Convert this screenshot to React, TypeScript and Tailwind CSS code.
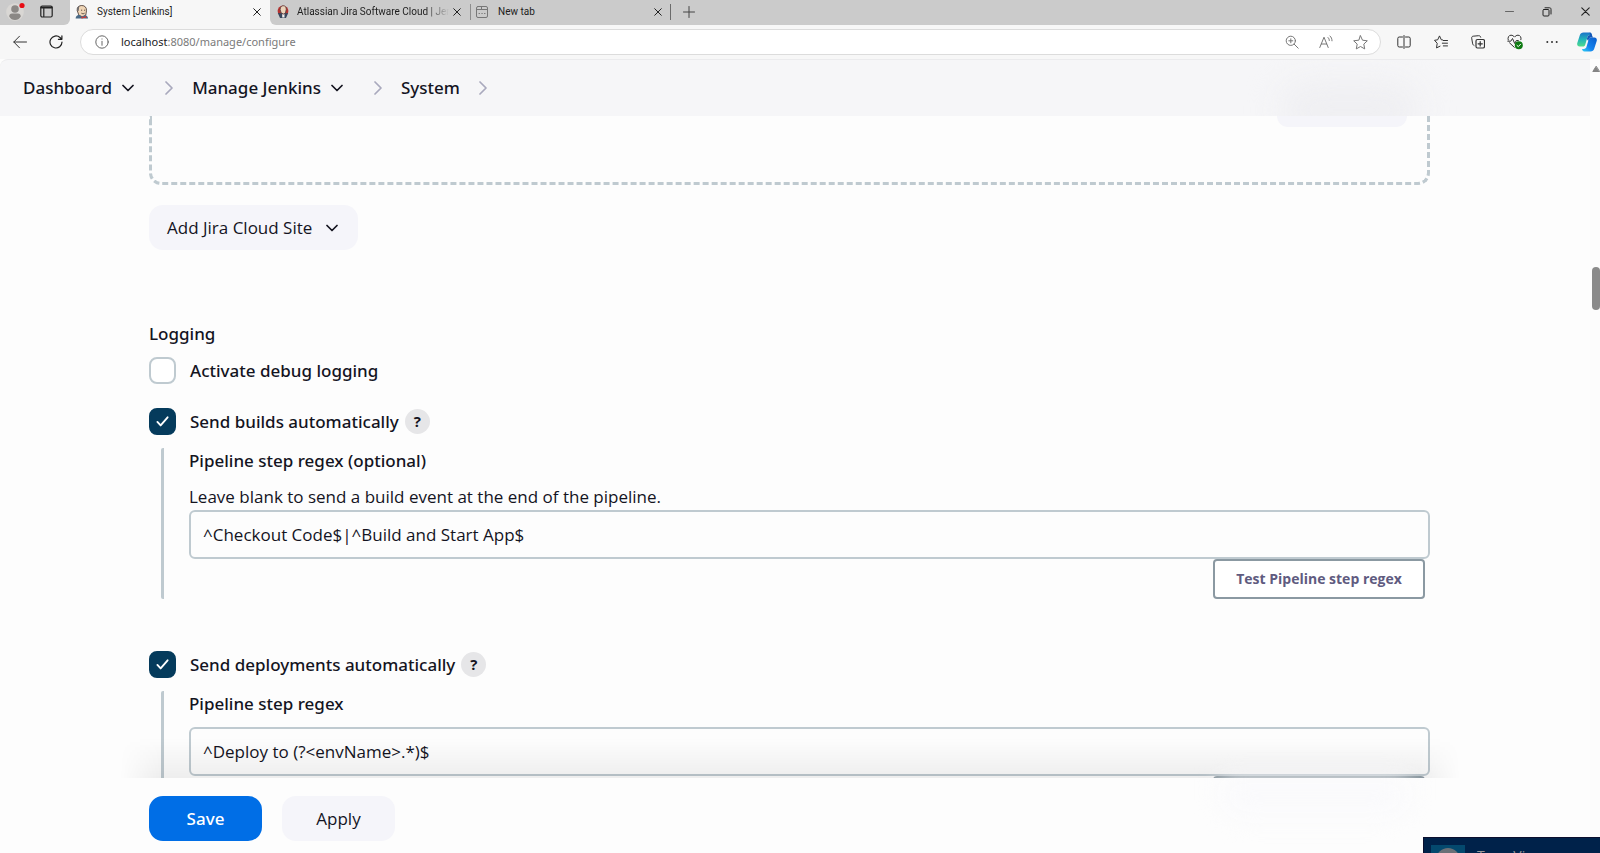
import { useState } from 'react'
import type { ReactNode } from 'react'

const iconBtn = 'flex h-full items-center justify-center'

function Svg({ size = 16, box = 16, width = 1, className = '', children }: {
  size?: number
  box?: number
  width?: number
  className?: string
  children: ReactNode
}) {
  return (
    <svg
      width={size}
      height={size}
      viewBox={`0 0 ${box} ${box}`}
      fill="none"
      stroke="currentColor"
      strokeWidth={width}
      strokeLinecap="round"
      strokeLinejoin="round"
      className={`shrink-0 ${className}`}
      aria-hidden="true"
    >
      {children}
    </svg>
  )
}

function JenkinsIcon() {
  return (
    <svg width="14" height="14" viewBox="0 0 14 14" className="shrink-0" aria-hidden="true">
      <path d="M2.2 5.5C1.8 2.2 4 .5 6.8.5c3 0 4.9 2 4.7 5.2L10.8 10 8 12 4 10.500z" fill="#f0d6b7" stroke="#40302a" strokeWidth=".8" />
      <path d="M2.400 6C1.500 4 2.500 1.500 4.500.8 3.900 2.300 4.100 4 3.600 6z" fill="#6d6b6d" />
      <path d="M.6 13.600c.2-2.300 1.300-3.500 3.400-3.800l3 1.800 3-1.600c1.900.3 2.900 1.600 3.100 3.600z" fill="#4a6a86" />
      <path d="M6.500 11.200l2.100 1 2.400-1.400.4 2.500-2.500-.5-2.300 1z" fill="#d33833" />
      <path d="M6 5.200h1.200M9 5.200h1.200M6.400 8.200c1 .7 2.200.7 3.200 0" stroke="#40302a" strokeWidth=".8" fill="none" />
    </svg>
  )
}

function JiraCloudIcon() {
  return (
    <svg width="12" height="14" viewBox="0 0 12 14" className="shrink-0" aria-hidden="true">
      <circle cx="6" cy="6" r="5.400" fill="#b5322f" />
      <path d="M3.200 4.500C3.300 1.600 4.800.8 6.300.8c2.100 0 3 1.400 2.900 3.700L8.400 8 6.500 9 4.100 7.800z" fill="#ecd3ba" stroke="#463a38" strokeWidth=".7" />
      <path d="M.8 8 5 8.300l1.200 2 1.600-2L11.200 8 9 13H3z" fill="#39465c" />
      <path d="m5.200 8.800 1 1 1.200-1 .2 3.700H5.200z" fill="#f1f1f1" />
    </svg>
  )
}

function CopilotIcon() {
  return (
    <svg width="20" height="20" viewBox="0 0 20 20" className="shrink-0" aria-hidden="true">
      <defs>
        <linearGradient id="cpA" x1="0" y1="0" x2="0" y2="1">
          <stop offset="0" stopColor="#1b74c9" />
          <stop offset=".5" stopColor="#22b5b8" />
          <stop offset="1" stopColor="#4fdc8c" />
        </linearGradient>
        <linearGradient id="cpB" x1="1" y1="0" x2="0" y2="1">
          <stop offset="0" stopColor="#0a5ccb" />
          <stop offset=".6" stopColor="#1583ee" />
          <stop offset="1" stopColor="#2fd0f5" />
        </linearGradient>
      </defs>
      <path d="M6.500.5h6.200c1.400 0 1.800 1 2.200 2.500H13c-1.400 0-2.200.9-2.600 2.200L8.300 12.500c-.4 1.400-1.100 2-2.500 2H2.600C.6 14.500-.2 13 .3 11L2.800 3.300C3.400 1.500 4.600.5 6.500.5z" fill="url(#cpA)" />
      <path d="M13.500 19.500H7.300c-1.400 0-1.900-1-2.300-2.500h1.900c1.400 0 2.200-.9 2.600-2.200l2.200-7.300c.4-1.400 1.100-2 2.500-2h3.200c2 0 2.800 1.500 2.300 3.500l-2.500 7.700c-.6 1.800-1.800 2.800-3.700 2.800z" fill="url(#cpB)" />
      <path d="M12.700.5c1.600 0 2 1.600 2.500 3.200.3 1 .8 1.800 1.800 1.800h-2.800c-1.400 0-2.100.6-2.500 2L11.300 9 9.900 7l.5-1.800C10.800 3.900 11.600 3 13 3z" fill="#1558b8" />
    </svg>
  )
}

function CloseX({ size = 8 }: { size?: number }) {
  return (
    <Svg size={size} box={8} className="text-[#222]">
      <path d="M.7.7l6.600 6.600M7.300.7.7 7.300" />
    </Svg>
  )
}

function TabBar() {
  return (
    <div className="flex h-[25px] shrink-0 items-stretch bg-[#f7f7f7] font-['Roboto','Noto_Sans',sans-serif] text-[10px] leading-3 text-[#1d1d1d]">
      <div className="flex w-[70px] shrink-0 items-center rounded-br-md bg-[#cbcbcb] pb-[2px] pl-[6px]">
        <button aria-label="Profile">
          <svg width="20" height="20" viewBox="0 0 20 20" aria-hidden="true">
            <circle cx="9" cy="10" r="8.800" fill="#d9d7d4" />
            <circle cx="9" cy="7" r="3.800" fill="#8b8885" />
            <path d="M3.200 14.500c0-2 1.200-3 2.800-3h6c1.600 0 2.800 1 2.800 3C13.500 17 11.500 18 9 18s-4.500-1-5.800-3.500z" fill="#8b8885" />
            <circle cx="16" cy="3.500" r="2.600" fill="#e80c14" />
          </svg>
        </button>
        <button aria-label="Workspaces" className="ml-[14px]">
          <Svg size={13} box={13} width={1.2} className="text-[#222]">
            <rect x=".8" y="1" width="11.400" height="11" rx="1.500" />
            <path d="M1.500 2.500h10" strokeWidth="2.200" />
            <path d="M3.800 3.500v8" />
          </Svg>
        </button>
      </div>
      <div className="flex w-[200px] shrink-0 items-center bg-[#f7f7f7] pr-[9px] pb-[2px] pl-[5px]">
        <JenkinsIcon />
        <span className="ml-2 flex-1">System [Jenkins]</span>
        <button aria-label="Close tab"><CloseX /></button>
      </div>
      <div className="flex min-w-0 flex-1 items-stretch rounded-bl-md bg-[#cbcbcb]">
        <div className="flex w-[200px] shrink-0 items-center pr-[9px] pb-[2px] pl-[7px]">
          <JiraCloudIcon />
          <span className="ml-2 min-w-0 flex-1 mask-r-from-85% whitespace-nowrap">
            Atlassian Jira Software Cloud | Jen
          </span>
          <button aria-label="Close tab" className="ml-1"><CloseX /></button>
        </div>
        <div className="mt-1 mb-[5px] w-px bg-[#8d8d8d]" />
        <div className="flex w-[199px] shrink-0 items-center pr-[8px] pb-[2px] pl-[5px]">
          <Svg size={12} box={12} className="text-[#777]">
            <rect x=".5" y=".5" width="11" height="11" rx="1.500" />
            <path d="M1 3.500h4.500V1M5.500 3.500H11" />
            <path d="M3 7.500h.5M5.800 7.500h.5M8.500 7.500H9" />
          </Svg>
          <span className="ml-[10px] flex-1">New tab</span>
          <button aria-label="Close tab"><CloseX /></button>
        </div>
        <div className="mt-1 mb-[5px] w-px bg-[#6b6b6b]" />
        <button aria-label="New tab" className="flex w-9 items-center justify-center pb-[2px]">
          <Svg size={12} box={12} className="text-[#444]">
            <path d="M6 .5v11M.5 6h11" />
          </Svg>
        </button>
        <div className="ml-auto flex pb-[2px]">
          <button aria-label="Minimize" className="flex w-[38px] items-center justify-center">
            <Svg size={9} box={9} className="text-[#666]"><path d="M.5 4.500h8" /></Svg>
          </button>
          <button aria-label="Restore" className="flex w-[38px] items-center justify-center">
            <Svg size={10} box={10} className="text-[#222]">
              <rect x="1" y="2.500" width="6" height="6.500" rx="1" />
              <path d="M3 .8h4.500c1 0 1.500.5 1.500 1.500V7" />
            </Svg>
          </button>
          <button aria-label="Close" className="flex w-[34px] items-center justify-center pl-1">
            <CloseX size={9} />
          </button>
        </div>
      </div>
    </div>
  )
}

function Toolbar() {
  return (
    <div className="flex h-[34px] shrink-0 items-center bg-[#f7f7f7] text-[#4b4b4b]">
      <button aria-label="Back" className={`${iconBtn} w-10`}>
        <Svg size={14} box={14} className="text-[#333]"><path d="M13.500 7H.8M6.500 1.200.8 7l5.700 5.800" /></Svg>
      </button>
      <button aria-label="Refresh" className={`${iconBtn} w-8`}>
        <Svg size={14} box={14} width={1.2} className="text-[#222]">
          <path d="M13 7a6 6 0 1 1-2-4.500l1.800 1.700M12.900.8v3.500H9.400" />
        </Svg>
      </button>
      <div className="ml-2 flex h-[26px] flex-1 items-center rounded-full border border-[#dcdcdc] bg-white pr-[12px] pl-[14px]">
        <Svg size={14} box={14} className="text-[#666]">
          <circle cx="7" cy="7" r="6.200" />
          <path d="M7 6.300v4M7 3.900v.2" />
        </Svg>
        <div className="ml-3 flex-1 font-['Noto_Sans',sans-serif] text-[11px]">
          <span className="text-[#222]">localhost</span>
          <span className="text-[#7a7a7a]">:8080/manage/configure</span>
        </div>
        <div className="flex items-center gap-5 text-[#777]">
          <button aria-label="Zoom">
            <Svg size={14} box={14}>
              <circle cx="5.800" cy="5.800" r="4.600" />
              <path d="m9.200 9.200 4 4M3.800 5.800h4M5.800 3.800v4" />
            </Svg>
          </button>
          <button aria-label="Read aloud">
            <Svg size={14} box={14}>
              <path d="M.8 12.500 5 2.200l4.200 10.300M2.300 9h5.400M9 2.500c.9.8 1.300 1.800 1.300 3M11 1c1.300 1.200 2 2.800 2 4.800" />
            </Svg>
          </button>
          <button aria-label="Add to favourites">
            <Svg size={15} box={15}>
              <path d="m7.500.8 2 4.400 4.800.6-3.500 3.300.9 4.800-4.200-2.400-4.200 2.400.9-4.800L.7 5.800l4.800-.6z" />
            </Svg>
          </button>
        </div>
      </div>
      <div className="ml-1 flex h-full text-[#333]">
        <button aria-label="Split screen" className={`${iconBtn} w-[37px]`}>
          <Svg size={14} box={14}>
            <path d="M5.500 2H2.200C1.300 2 .8 2.500.8 3.400v7.200c0 .9.5 1.400 1.400 1.400h3.300M8.500 2h3.300c.9 0 1.400.5 1.400 1.400v7.200c0 .9-.5 1.400-1.400 1.400H8.500M7 .5v13" />
          </Svg>
        </button>
        <button aria-label="Favourites" className={`${iconBtn} w-[37px]`}>
          <Svg size={14} box={14}>
            <path d="M8.500 4.900 7.300 4.800 5.500.9 3.700 4.800.5 5.300l2.700 3-.7 4.600L6 11.200M9.300 5.500h4.200M8.300 8.200h5.200M9.300 10.900h4.200" />
          </Svg>
        </button>
        <button aria-label="Collections" className={`${iconBtn} w-[37px]`}>
          <Svg size={14} box={14}>
            <path d="M3 10.500C1.900 10 1.700 9.200 1.500 8L.7 3.200C.6 2 1 1.400 2.200 1.200L7.500.7C8.700.6 9.400 1 9.700 2.200" />
            <rect x="5" y="4.500" width="8.500" height="8.500" rx="1.500" strokeWidth="1.200" />
            <path d="M9.200 6.700v4.200M7.100 8.800h4.200" strokeWidth="1.200" />
          </Svg>
        </button>
        <button aria-label="Browser essentials" className={`${iconBtn} w-[37px]`}>
          <Svg size={16} box={16}>
            <path d="M1.200 6C.4 3.500 1.800 1.200 4 1.200c1.600 0 2.600.8 3.500 1.900 1-1.100 2-1.900 3.500-1.900 2.200 0 3.600 2.100 2.900 4.500M2.500 8.800l4.800 4.500M.8 7.200h3L5.500 4.500l2.200 5L9.300 6.500h2" />
            <circle cx="11.800" cy="11.300" r="4" fill="#0e7a12" stroke="none" />
            <path d="m10 11.400 1.300 1.200 2.300-2.400" stroke="#fff" />
          </Svg>
        </button>
        <button aria-label="Settings and more" className={`${iconBtn} w-[37px]`}>
          <svg width="12" height="4" viewBox="0 0 12 4" fill="#333" aria-hidden="true">
            <circle cx="1.300" cy="2" r="1" /><circle cx="6" cy="2" r="1" /><circle cx="10.700" cy="2" r="1" />
          </svg>
        </button>
        <button aria-label="Copilot" className={`${iconBtn} ml-1 w-[26px]`}>
          <CopilotIcon />
        </button>
      </div>
    </div>
  )
}

function ChevronDown() {
  return (
    <Svg size={12} box={12} width={1.7} className="text-[#14141f]"><path d="m1 3.500 5 5 5-5" /></Svg>
  )
}

function ChevronRight() {
  return (
    <Svg size={14} box={14} width={1.7} className="text-[#a9a9bd]"><path d="m4 1 6 6-6 6" /></Svg>
  )
}

const strong = "font-['Noto_Sans','Open_Sans',sans-serif] font-medium"

function Breadcrumbs() {
  return (
    <nav className={`relative flex h-[57px] shrink-0 items-center overflow-hidden rounded-tl-lg border-t border-[#ebebed] bg-[#f6f6f8] pl-[23px] text-[17px] text-[#14141f] ${strong}`}>
      {/* content scrolled behind the translucent header */}
      <div className="absolute right-[170px] -bottom-6 h-[60px] w-[140px] rounded-full bg-[#efeff2] blur-lg" />
      <a href="#dashboard">Dashboard</a>
      <button aria-label="Dashboard menu" className="ml-[10px]"><ChevronDown /></button>
      <span className="ml-7"><ChevronRight /></span>
      <a href="#manage" className="ml-4">Manage Jenkins</a>
      <button aria-label="Manage Jenkins menu" className="ml-[10px]"><ChevronDown /></button>
      <span className="ml-7"><ChevronRight /></span>
      <a href="#system" className="ml-4">System</a>
      <span className="ml-4"><ChevronRight /></span>
    </nav>
  )
}

function Check({ id, label, defaultChecked = false, help = false }: {
  id: string
  label: string
  defaultChecked?: boolean
  help?: boolean
}) {
  const [checked, setChecked] = useState(defaultChecked)
  return (
    <div className="flex h-[27px] items-center">
      <span className="grid size-[27px] place-items-center">
        <input
          id={id}
          type="checkbox"
          checked={checked}
          onChange={(e) => setChecked(e.target.checked)}
          className="col-start-1 row-start-1 size-[27px] appearance-none rounded-lg border-2 border-[#bfcad0] bg-white checked:border-[#053b5c] checked:bg-[#053b5c]"
        />
        {checked && (
          <Svg size={13} box={14} width={2} className="pointer-events-none col-start-1 row-start-1 text-white">
            <path d="m1.500 7.500 3.500 3.700 7.500-8.700" />
          </Svg>
        )}
      </span>
      <label htmlFor={id} className={`ml-[14px] ${strong}`}>{label}</label>
      {help && (
        <button aria-label={`Help for ${label}`} className="ml-[6px] size-[25px] rounded-full bg-[#e6e6e8] text-[15px] leading-[25px] font-bold">
          ?
        </button>
      )}
    </div>
  )
}

const field =
  'block h-[49px] w-full rounded-md border-2 border-[#bfcad0] bg-transparent px-3 text-[17px] text-[#14141f] outline-none'
const testBtn =
  'mr-[5px] h-10 w-[212px] rounded border-2 border-[#8b99a2] bg-white text-[14px] font-bold text-[#5f5b80]'

export default function App() {
  return (
    <div className="flex h-screen flex-col overflow-hidden bg-[#fdfdfd] font-['Open_Sans','Noto_Sans',sans-serif] text-[#14141f]">
      <TabBar />
      <Toolbar />
      <div className="flex min-h-0 flex-1">
        <div className="relative flex min-w-0 flex-1 flex-col">
          <Breadcrumbs />
          <main className="min-h-0 flex-1 overflow-hidden pr-[160px] pl-[149px] text-[17px] leading-6">
            <div className="flex h-[69px] justify-end rounded-b-xl border-[3px] border-t-0 border-dashed border-[#bfcad0] pr-5">
              <div className="h-[11px] w-[130px] rounded-b-xl bg-[#f5f5fa]" />
            </div>
            <button className="mt-5 flex h-[45px] items-center rounded-[14px] bg-[#f5f5fa] pr-5 pl-[18px]">
              Add Jira Cloud Site
              <span className="ml-[14px]"><ChevronDown /></span>
            </button>

            <h2 className={`mt-[72px] ${strong}`}>Logging</h2>
            <div className="mt-[11px]">
              <Check id="debug" label="Activate debug logging" />
            </div>

            <section className="mt-6">
              <Check id="builds" label="Send builds automatically" defaultChecked help />
              <div className="mt-[13px] ml-3 rounded-xs border-l-[3px] border-[#bfcad0] pl-[25px]">
                <label htmlFor="build-regex" className={`block pt-px ${strong}`}>
                  Pipeline step regex (optional)
                </label>
                <p className="mt-3">Leave blank to send a build event at the end of the pipeline.</p>
                <input id="build-regex" className={`mt-px ${field}`} defaultValue="^Checkout Code$|^Build and Start App$" />
                <div className="flex justify-end">
                  <button className={testBtn}>Test Pipeline step regex</button>
                </div>
              </div>
            </section>

            <section className="mt-[52px]">
              <Check id="deployments" label="Send deployments automatically" defaultChecked help />
              <div className="mt-[13px] ml-3 rounded-xs border-l-[3px] border-[#bfcad0] pl-[25px]">
                <label htmlFor="deploy-regex" className={`block pt-px ${strong}`}>
                  Pipeline step regex
                </label>
                <input id="deploy-regex" className={`mt-[11px] ${field}`} defaultValue="^Deploy to (?<envName>.*)$" />
                <div className="flex justify-end">
                  <button aria-label="Test Pipeline step regex" className={testBtn} />
                </div>
              </div>
            </section>
          </main>

          <footer className="relative flex h-[75px] shrink-0 gap-5 bg-[#fdfdfd] pt-[18px] pl-[149px] text-[17px]">
            <div className="pointer-events-none absolute right-[130px] bottom-full left-[120px] h-10 bg-linear-to-t from-black/6 to-transparent mask-x-from-97%" />
            <div className="absolute top-0 right-[180px] h-10 w-[190px] rounded-b-3xl bg-[#fafafc] blur-md" />
            <button className={`h-[45px] w-[113px] rounded-[14px] bg-[#006ee6] text-white ${strong}`}>Save</button>
            <button className="h-[45px] w-[113px] rounded-[14px] bg-[#f5f5fa]">Apply</button>
          </footer>
        </div>

        <div className="flex w-[10px] shrink-0 flex-col items-end bg-[#fcfcfc] pt-[6px]">
          <Svg size={8} box={8} className="text-[#858585]"><path d="M4 1.500.8 6.500h6.400z" fill="currentColor" /></Svg>
          <div className="mt-[194px] h-[43px] w-2 rounded-full bg-[#8a8a8a]" />
        </div>
      </div>

      {/* desktop notification sliding in over the window */}
      <div className="absolute right-0 bottom-0 flex h-4 w-[177px] items-start overflow-hidden border-t border-l border-[#0b0f2e] bg-[#00224a] pt-[7px] pl-[7px]">
        <div className="flex h-8 w-[34px] shrink-0 justify-center overflow-hidden bg-[#04496e] pt-[3px]">
          <div className="size-6 rounded-full bg-[#6b7077]" />
        </div>
        <span className="ml-3 pt-[3px] text-[14px] leading-4 text-[#9a9a9a]">TeamViewer</span>
      </div>
    </div>
  )
}
